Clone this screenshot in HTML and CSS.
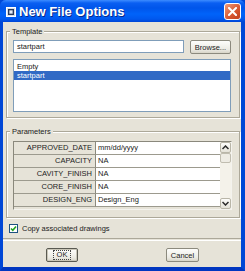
FILE: index.html
```html
<!DOCTYPE html>
<html lang="en">
<head>
   <meta charset="UTF-8">
   <title>New File Options</title>
   <link rel="stylesheet" href="styles.css">
</head>
<body>

<div class="window">
   <div class="titlebar">
       <svg class="app-icon" width="10" height="10" viewBox="0 0 10 10">
           <rect x="0.5" y="0.5" width="9" height="9" fill="#d8dde8" stroke="#ffffff"/>
           <rect x="2.5" y="2.5" width="5" height="5" fill="#5a6a8a" stroke="#2a3a5a"/>
           <rect x="3.5" y="3.5" width="3" height="3" fill="#e8ecf4"/>
       </svg>
       <span class="title">New File Options</span>
       <span class="close">
           <svg width="9" height="9" viewBox="0 0 9 9">
               <path d="M1 1 L8 8 M8 1 L1 8" stroke="#ffffff" stroke-width="2" stroke-linecap="square"/>
           </svg>
       </span>
   </div>

   <div class="dialog">
       <!-- Template -->
       <fieldset class="group template">
           <legend>Template</legend>
           <div class="template-row">
               <div class="field">startpart</div>
               <div class="btn browse">Browse...</div>
           </div>
           <ul class="list">
               <li>Empty</li>
               <li class="selected">startpart</li>
           </ul>
       </fieldset>

       <!-- Parameters -->
       <fieldset class="group params">
           <legend>Parameters</legend>
           <div class="param-table">
               <div class="param-grid">
                   <div class="param-name">APPROVED_DATE</div><div class="param-value">mm/dd/yyyy</div>
                   <div class="param-name">CAPACITY</div><div class="param-value">NA</div>
                   <div class="param-name">CAVITY_FINISH</div><div class="param-value">NA</div>
                   <div class="param-name">CORE_FINISH</div><div class="param-value">NA</div>
                   <div class="param-name">DESIGN_ENG</div><div class="param-value">Design_Eng</div>
               </div>
               <div class="scrollbar">
                   <div class="sb-btn">
                       <svg width="7" height="5" viewBox="0 0 7 5"><path d="M0.5 4 L3.5 1 L6.5 4" fill="none" stroke="#2b2b2b" stroke-width="1.5"/></svg>
                   </div>
                   <div class="sb-thumb"></div>
                   <div class="sb-track"></div>
                   <div class="sb-btn">
                       <svg width="7" height="5" viewBox="0 0 7 5"><path d="M0.5 1 L3.5 4 L6.5 1" fill="none" stroke="#2b2b2b" stroke-width="1.5"/></svg>
                   </div>
               </div>
           </div>
       </fieldset>

       <div class="check-row">
           <span class="checkbox">
               <svg width="7" height="7" viewBox="0 0 7 7"><path d="M1 3.5 L2.8 5.3 L6 1.5" fill="none" stroke="#21a121" stroke-width="1.6"/></svg>
           </span>
           <span>Copy associated drawings</span>
       </div>

       <div class="separator"></div>

       <div class="actions">
           <div class="btn ok"><span class="focus">OK</span></div>
           <div class="btn cancel">Cancel</div>
       </div>
   </div>
</div>

</body>
</html>
```

FILE: styles.css
```css
body {
    margin: 0;
    padding: 0;
    font-family: "Liberation Sans", Arial, sans-serif;
    font-size: 7.5px;
    color: #1a1a1a;
}
.window {
    width: 245px;
    height: 271px;
    display: flex;
    flex-direction: column;
    box-sizing: border-box;
    background: #0a4fe0;
    border-left: 3px solid #0047d6;
    border-right: 4px solid #0047d6;
    border-bottom: 4px solid #0036c0;
}
.titlebar {
    height: 22px;
    margin: 0 -4px 0 -3px;
    padding: 0 4px 0 6px;
    display: flex;
    align-items: center;
    background: linear-gradient(#3d8cff 0, #0a5ff2 3px, #0055ea 8px, #0063fa 14px, #0058ee 19px, #0046d6 22px);
    border-radius: 6px 6px 0 0;
}
.app-icon {
    margin-top: 2px;
}
.title {
    margin-left: 3px;
    flex: 1;
    color: #fff;
    font-size: 13px;
    font-weight: bold;
    text-shadow: 1px 1px #0a2a8a;
}
.close {
    width: 15px;
    height: 15px;
    display: flex;
    align-items: center;
    justify-content: center;
    border: 1px solid #fff;
    border-radius: 3px;
    background: linear-gradient(135deg, #f19a78, #d6552f 60%, #c0401d);
    margin-top: 1px;
}
.dialog {
    flex: 1;
    background-color: #e6e3d8;
    display: flex;
    flex-direction: column;
}
.group {
    margin: 0 1px 0 3px;
    border: 1px solid #aca899;
    box-shadow: inset 1px 1px #fff, 1px 1px #fff;
    min-width: 0;
}
.group legend {
    padding: 0 2px;
    margin-left: -3px;
    line-height: 9px;
    background-color: #e6e3d8;
    color: #222;
}
.template {
    margin-top: 5px;
    padding: 4px 8px 5px 6px;
}
.params {
    margin-top: 9px;
    padding: 5px 7px 7px 6px;
}
.template-row {
    display: flex;
    align-items: flex-start;
    gap: 6px;
}
.field {
    flex: 1;
    height: 13px;
    box-sizing: border-box;
    border: 1px solid #7f9db9;
    background: #fff;
    padding: 0 3px;
    line-height: 11px;
}
.btn {
    height: 14px;
    box-sizing: border-box;
    border: 1px solid #8c8a7e;
    border-radius: 2px;
    background: linear-gradient(#fdfdfb, #ecebe4 70%, #d8d5c8);
    display: flex;
    align-items: center;
    justify-content: center;
    color: #222;
}
.browse {
    width: 41px;
}
.list {
    list-style: none;
    margin: 5px 0 0 0;
    padding: 2px 0 0 0;
    height: 53px;
    box-sizing: border-box;
    border: 1px solid #7f9db9;
    background: #fff;
}
.list li {
    height: 9px;
    line-height: 9px;
    padding-left: 3px;
}
.list .selected {
    background-color: #316ac5;
    color: #fff;
}
.param-table {
    height: 69px;
    box-sizing: border-box;
    border: 1px solid #8a887c;
    border-right-color: #f4f3ee;
    border-bottom-color: #f4f3ee;
    display: flex;
}
.param-grid {
    flex: 1;
    display: grid;
    grid-template-columns: 81px 1fr;
    grid-auto-rows: 13px;
}
.param-name {
    border-bottom: 1px solid #9c9a8e;
    text-align: right;
    padding-right: 3px;
    line-height: 12px;
    color: #222;
}
.param-value {
    background: #fff;
    border-left: 1px solid #8c8a7e;
    border-bottom: 1px solid #9c9a8e;
    padding-left: 2px;
    line-height: 12px;
}
.scrollbar {
    width: 11px;
    display: flex;
    flex-direction: column;
    background: #f4f2ea;
}
.sb-btn {
    height: 11px;
    box-sizing: border-box;
    border: 1px solid #b9b6a8;
    border-radius: 2px;
    background: linear-gradient(#fdfdfa, #e4e2d8);
    display: flex;
    align-items: center;
    justify-content: center;
}
.sb-thumb {
    height: 10px;
    box-sizing: border-box;
    border: 1px solid #c0bdb0;
    border-radius: 2px;
    background: #eeece4;
}
.sb-track {
    flex: 1;
}
.check-row {
    margin: 6px 0 0 6px;
    height: 9px;
    display: flex;
    align-items: center;
    gap: 4px;
    color: #222;
}
.checkbox {
    width: 9px;
    height: 9px;
    box-sizing: border-box;
    border: 1px solid #1c5180;
    background: #fff;
    display: flex;
    align-items: center;
    justify-content: center;
}
.separator {
    margin-top: 5px;
    height: 1px;
    border-top: 1px solid #aca899;
    border-bottom: 1px solid #fff;
}
.actions {
    margin: 7px 0 0 43px;
    display: flex;
    gap: 88px;
}
.ok {
    width: 32px;
    border: 1px solid #5a5a52;
    box-shadow: inset 0 0 0 1px #c9c6b8;
}
.ok .focus {
    outline: 1px dotted #444;
    padding: 0 3px;
    line-height: 8px;
}
.cancel {
    width: 33px;
}
```
